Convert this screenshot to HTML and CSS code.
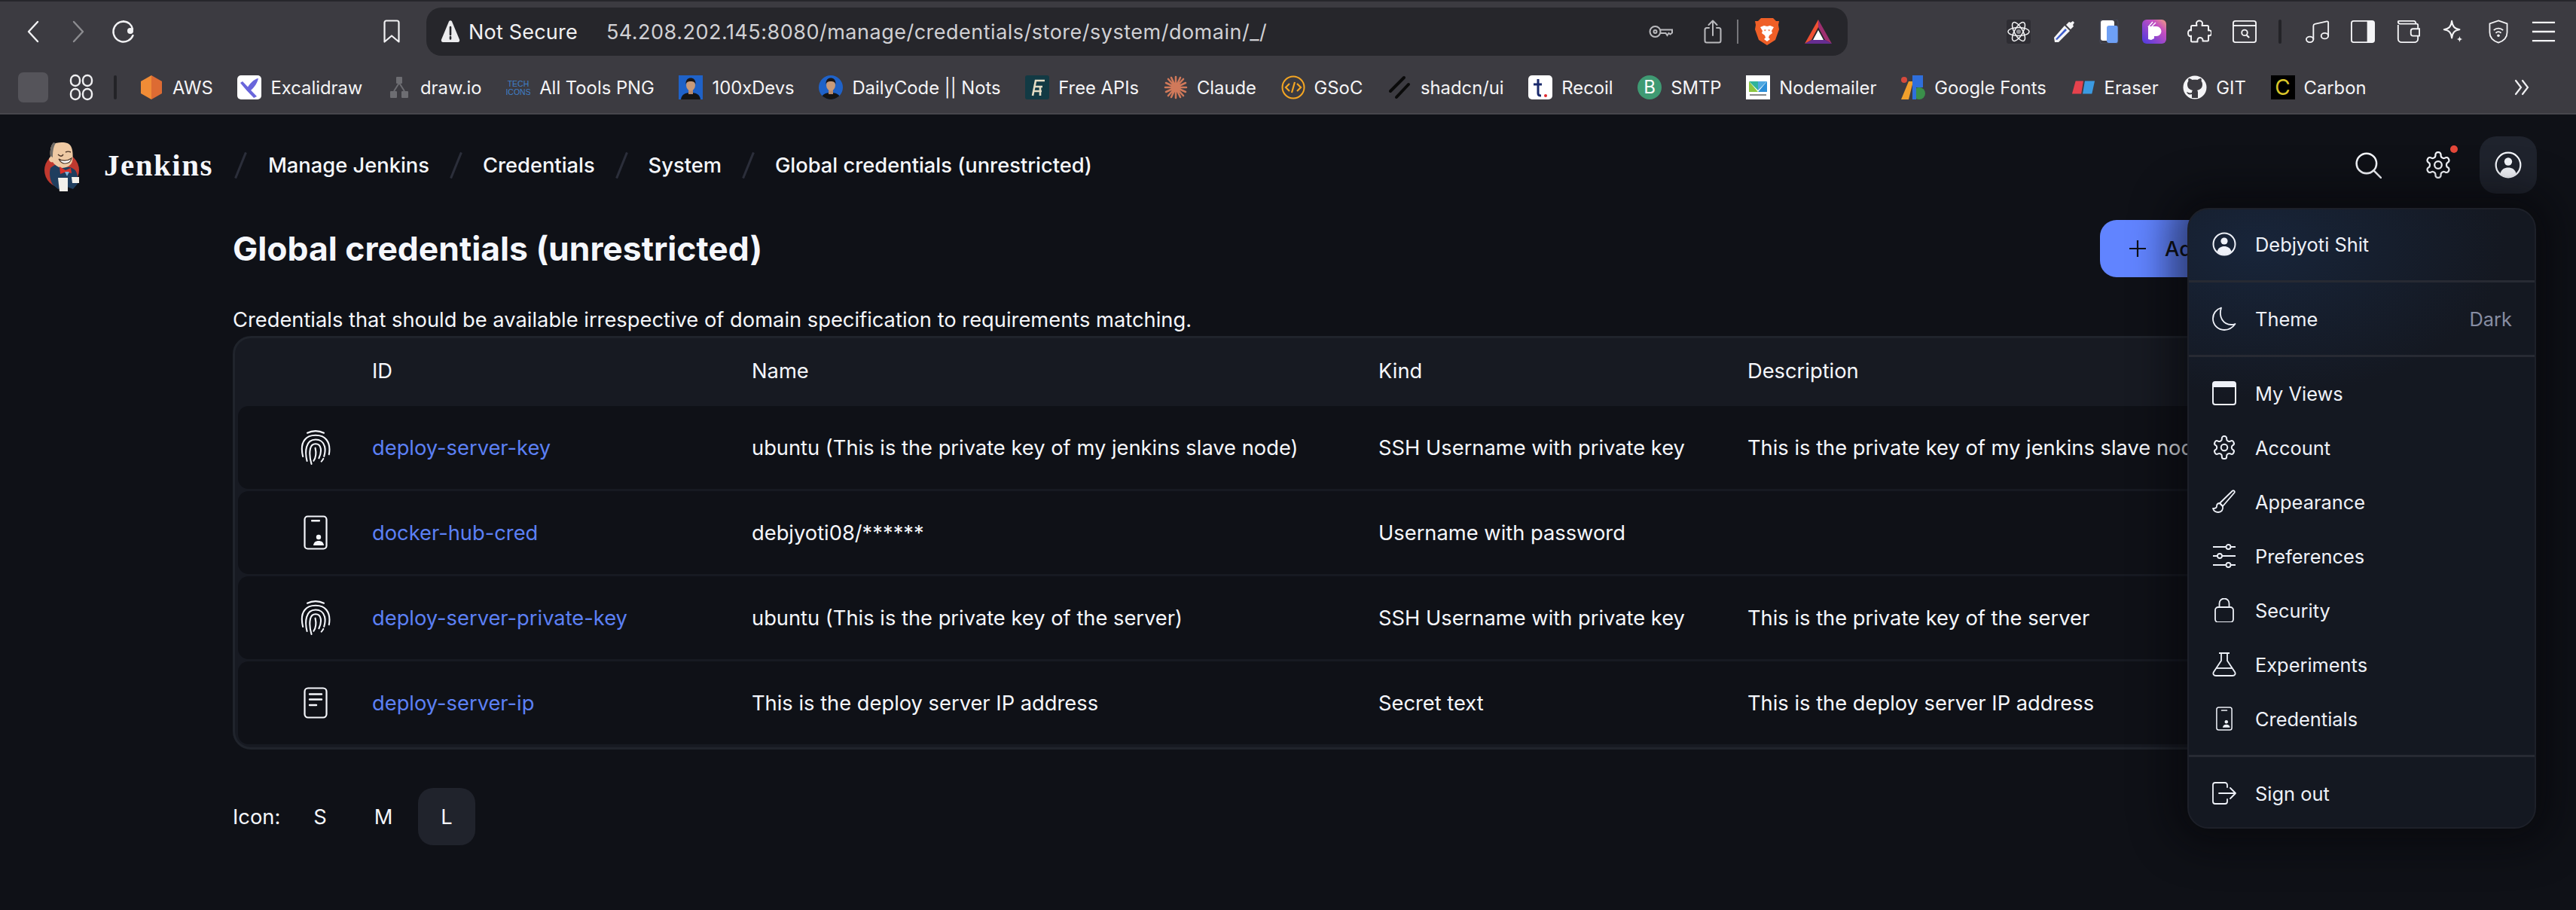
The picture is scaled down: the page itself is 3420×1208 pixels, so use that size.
FILE: index.html
```html
<!doctype html>
<html lang="en">
  <head>
    <meta charset="UTF-8" />
    <title>Global credentials (unrestricted)</title>
    <link rel="stylesheet" href="styles.css">
  </head>
  <body>
    <svg class="sprite" aria-hidden="true">
      <symbol id="i-user" viewBox="0 0 32 32">
        <circle cx="16" cy="16" r="14.5" fill="none" stroke="currentColor" stroke-width="2"/>
        <circle cx="16" cy="12" r="4.6" fill="currentColor"/>
        <path d="M6.5 26c1.5-5 5-7 9.5-7s8 2 9.5 7c-2.5 2.5-5.800 4-9.5 4s-7-1.5-9.5-4z" fill="currentColor"/>
      </symbol>
      <symbol id="i-gear" viewBox="1.500 .8 21 22.400">
        <path fill="none" stroke="currentColor" stroke-width="1.400" d="M12.220 1.500h-.44a2 2 0 0 0-2 2v.68a2 2 0 0 1-1 1.730l-.43.250a2 2 0 0 1-2 0l-.15-.08a2 2 0 0 0-2.730.730l-.22.380a2 2 0 0 0 .73 2.730l.15.100a2 2 0 0 1 1 1.720v.51a2 2 0 0 1-1 1.740l-.15.090a2 2 0 0 0-.73 2.730l.22.380a2 2 0 0 0 2.730.730l.15-.08a2 2 0 0 1 2 0l.43.250a2 2 0 0 1 1 1.730v.68a2 2 0 0 0 2 2h.44a2 2 0 0 0 2-2v-.68a2 2 0 0 1 1-1.730l.43-.25a2 2 0 0 1 2 0l.15.080a2 2 0 0 0 2.730-.73l.22-.39a2 2 0 0 0-.73-2.730l-.15-.08a2 2 0 0 1-1-1.740v-.5a2 2 0 0 1 1-1.740l.15-.09a2 2 0 0 0 .73-2.730l-.22-.38a2 2 0 0 0-2.730-.73l-.15.080a2 2 0 0 1-2 0l-.43-.25a2 2 0 0 1-1-1.730v-.68a2 2 0 0 0-2-2z"/>
        <circle cx="12" cy="12" r="3" fill="none" stroke="currentColor" stroke-width="1.400"/>
      </symbol>
      <symbol id="i-finger" viewBox="3 1.500 18 21">
        <g fill="none" stroke="currentColor" stroke-width=".95" stroke-linecap="round">
          <path d="M7 3.200c3-1.600 7-1.600 10 0"/>
          <path d="M4.300 17.500C3 12 4 9 5.500 7.200 7 5.300 9.500 4.600 12 4.600s5 .7 6.500 2.600c1.600 2 2.400 5 1.600 9"/>
          <path d="M6.800 20.200C6 17 6 13.500 6.600 11.500 7.400 8.600 9.500 7.200 12 7.200s4.800 1.400 5.500 4.200c.5 2 .2 4-.4 6"/>
          <path d="M9.500 22C8.600 19 8.300 15 8.800 12.700 9.200 10.800 10.500 9.800 12 9.800s2.800 1 3.100 2.900c.3 2-.2 4-1.100 5.800"/>
          <path d="M11.800 12.300c.7 3 .2 6-1 7.800"/>
          <path d="M15.500 20.500c.5-.5.900-1.100 1.200-1.700"/>
        </g>
      </symbol>
      <symbol id="i-phone" viewBox="0 0 32 46">
        <rect x="1.500" y="1.500" width="29" height="43" rx="4" fill="none" stroke="currentColor" stroke-width="2.200"/>
        <rect x="10" y="6" width="12" height="2.400" rx="1" fill="currentColor"/>
        <circle cx="20" cy="29" r="3.200" fill="currentColor"/>
        <path d="M13 40c.5-4 3-6 7-6s6.500 2 7 6z" fill="currentColor"/>
      </symbol>
      <symbol id="i-doc" viewBox="0 0 32 42">
        <rect x="1.500" y="1.500" width="29" height="39" rx="4.500" fill="none" stroke="currentColor" stroke-width="2.200"/>
        <path d="M8 9.500h16M8 16.500h16M8 24h9" fill="none" stroke="currentColor" stroke-width="2.400" stroke-linecap="round"/>
      </symbol>
      <symbol id="i-avatar" viewBox="0 0 32 32">
        <rect width="32" height="32" fill="#1f62c8"/>
        <path d="M3 32c1-7 6-9 13-9s12 2 13 9z" fill="#141414"/>
        <rect x="13" y="18" width="6" height="7" fill="#b98a6a"/>
        <ellipse cx="16" cy="13" rx="6" ry="7.500" fill="#c99a78"/>
        <path d="M9.500 12c-.5-6 3-8.500 6.500-8.500s7 2.500 6.500 8.500c-1-3-2.500-4-6.500-4s-5.500 1-6.500 4z" fill="#1c1512"/>
      </symbol>
    </svg>

    <header class="chrome">
      <div class="toolbar">
        <span class="nav-btn">
          <svg class="nav-ico" viewBox="0 0 16 30"><path d="M14 2 2 15l12 13" fill="none" stroke="#f2f2f4" stroke-width="2.400" stroke-linecap="round" stroke-linejoin="round"/></svg>
        </span>
        <span class="nav-btn">
          <svg class="nav-ico" viewBox="0 0 16 30"><path d="m2 2 12 13L2 28" fill="none" stroke="#8c8c90" stroke-width="2.400" stroke-linecap="round" stroke-linejoin="round"/></svg>
        </span>
        <span class="nav-btn">
          <svg class="reload-ico" viewBox="0 0 32 32"><path d="M16 2.500a13.500 13.500 0 1 0 12.500 18.500" fill="none" stroke="#f2f2f4" stroke-width="2.400" stroke-linecap="round"/><path d="M16 2.500c6 0 11 4.500 12 10" fill="none" stroke="#f2f2f4" stroke-width="2.400" stroke-linecap="round"/><circle cx="25" cy="15" r="4" fill="#f2f2f4"/></svg>
        </span>
        <svg class="bookmark-ico" viewBox="0 0 24 32"><path d="M2.500 29.500V4c0-1.400 1-2.500 2.500-2.500h14c1.500 0 2.500 1.100 2.500 2.500v25.500L12 21.500z" fill="none" stroke="#f2f2f4" stroke-width="2.200" stroke-linejoin="round"/></svg>

        <div class="omnibox">
          <svg class="warn-ico" viewBox="0 0 26 32"><path d="M11 2.500c.9-1.600 3.100-1.600 4 0l10 24c.7 1.700-.4 3.500-2.200 3.500H3.200C1.400 30 .3 28.200 1 26.500z" fill="#ececee"/><path d="M13 10v10M13 23v2.500" stroke="#26262b" stroke-width="2.600" stroke-linecap="round"/></svg>
          <span class="not-secure">Not Secure</span>
          <span class="url">54.208.202.145:8080/manage/credentials/store/system/domain/_/</span>
          <svg class="key-ico" viewBox="0 0 32 18"><g fill="none" stroke="#b9b9bd" stroke-width="2"><circle cx="8.500" cy="9" r="7"/><circle cx="8.500" cy="9" r="2"/><path d="M15.500 6.500H31v4l-2.500 2-2-1.500-2 3-2-3h-6.800"/></g></svg>
          <svg class="share-ico" viewBox="0 0 24 32"><g fill="none" stroke="#b9b9bd" stroke-width="2" stroke-linecap="round" stroke-linejoin="round"><path d="M7 11H4a2.500 2.500 0 0 0-2.500 2.500V28A2.500 2.500 0 0 0 4 30.500h16a2.500 2.500 0 0 0 2.500-2.500V13.500A2.500 2.500 0 0 0 20 11h-3"/><path d="M12 21V2M6.500 7 12 1.500 17.500 7"/></g></svg>
          <span class="omni-sep"></span>
          <svg class="brave-ico" viewBox="0 0 32 36"><path d="M8 0h16l4 4 4 0-1 5 1 6-5 14-11 7-11-7-5-14 1-6-1-5 4 0z" fill="#ef5f27"/><path d="M7 12l5-2 4 1 4-1 5 2-3 5 1 3-4 3-1 3 2 2-4 3-4-3 2-2-1-3-4-3 1-3z" fill="#fff"/><path d="M12 15.500h3l-2 2zM20 15.500h-3l2 2z" fill="#ef5f27"/></svg>
          <svg class="bat-ico" viewBox="0 0 36 32"><path d="M18 0 0 32l9-5L18 10z" fill="#ef5033"/><path d="M18 0v10l9 17 9 5z" fill="#9e2f70"/><path d="M0 32h36l-9-5H9z" fill="#662d91"/><path d="M18 14l7 13H11z" fill="#fff"/></svg>
        </div>

        <div class="exts">
          <span class="ext"><span class="react-box"><svg class="ext-ico" viewBox="0 0 32 32"><g fill="none" stroke="#f4f4f6" stroke-width="1.500"><ellipse cx="16" cy="16" rx="14" ry="5.500"/><ellipse cx="16" cy="16" rx="14" ry="5.500" transform="rotate(60 16 16)"/><ellipse cx="16" cy="16" rx="14" ry="5.500" transform="rotate(120 16 16)"/></g><circle cx="16" cy="16" r="3" fill="#8d8d92"/></svg></span></span>
          <span class="ext"><svg class="ext-ico" viewBox="0 0 32 32"><path d="M3 24 17 8l7 7-15 15H4z" fill="#f4f4f6"/><path d="M5 26 18 12l2 2L7 27z" fill="#3b5bcb"/><path d="m19 7 4-4 2 1 3-2 2 2-2 3 1 2-4 4z" fill="#f4f4f6"/></svg></span>
          <span class="ext"><svg class="ext-ico" viewBox="0 0 32 32"><rect x="5" y="1" width="18" height="27" rx="3" fill="#fff"/><rect x="13" y="8" width="15" height="23" rx="3" fill="#6ea0f5"/><rect x="4" y="0" width="24" height="32" rx="3" fill="none" stroke="#4a4f63" stroke-width=".8"/></svg></span>
          <span class="ext"><span class="pocket"><svg class="ext-ico" viewBox="0 0 32 32"><path d="M8 9h11a6 6 0 0 1 0 13h-3v3l-4 2-4-1z" fill="#fff"/><path d="M8 10 14 3M12 10l6-6" stroke="#fff" stroke-width="1.400"/></svg></span></span>
          <span class="ext"><svg class="ext-ico" viewBox="0 0 32 32"><path d="M12 5c0-2 2-3.500 4-3.500s4 1.500 4 3.500c0 1-.5 2-.5 3h7c1 0 1.500.5 1.500 1.500v5c1-.5 1.700-.5 2.500 0 2.200 1.500 2.200 5 0 6.500-.8.500-1.500.5-2.500 0v6c0 1-.5 1.500-1.500 1.500h-6c.5-3-1.500-4.500-3.500-4.500S13 25 13.500 29.500h-7c-1 0-1.500-.5-1.500-1.500v-6.500C3.500 23 1 21.500 1 18s2.500-5 4-3.500V9.500C5 8.500 5.500 8 6.500 8h6c0-1-.5-2-.5-3z" fill="none" stroke="#f4f4f6" stroke-width="2" stroke-linejoin="round"/></svg></span>
          <span class="ext"><svg class="ext-ico" viewBox="0 0 34 32"><g fill="none" stroke="#f4f4f6" stroke-width="2"><rect x="1" y="1" width="32" height="30" rx="3"/><path d="M1 7.500h32"/><circle cx="17" cy="17.500" r="4"/><path d="m20 21 3.500 3.500" stroke-width="2.400"/></g></svg></span>
          <span class="ext-sep"></span>
          <span class="ext"><svg class="ext-ico" viewBox="0 0 34 34"><g fill="none" stroke="#f4f4f6" stroke-width="2"><ellipse cx="6" cy="28" rx="5" ry="4"/><ellipse cx="27" cy="23" rx="5" ry="4"/><path d="M11 28V9c0-1.500.8-2.500 2-2.800L30 2.500c1.200-.2 2 .5 2 1.700V23"/></g></svg></span>
          <span class="ext"><svg class="ext-ico" viewBox="0 0 34 32"><rect x="1" y="1" width="32" height="30" rx="3" fill="none" stroke="#f4f4f6" stroke-width="2"/><path d="M23 1h7a3 3 0 0 1 3 3v24a3 3 0 0 1-3 3h-7z" fill="#f4f4f6"/></svg></span>
          <span class="ext"><svg class="ext-ico" viewBox="0 0 34 32"><g fill="none" stroke="#f4f4f6" stroke-width="2"><path d="M3 6.500V26a5 5 0 0 0 5 5h18a5 5 0 0 0 5-5V7a2 2 0 0 0-2-2H6a3 3 0 0 1-3-3 1 1 0 0 1 1-1h21c2 0 3 1 3 4"/><path d="M33 12h-9a3 3 0 0 0-3 3v4a3 3 0 0 0 3 3h9z" fill="#3c3b41"/></g></svg></span>
          <span class="ext"><svg class="ext-ico" viewBox="0 0 32 34"><g fill="none" stroke="#f4f4f6" stroke-width="2.200" stroke-linejoin="round"><path d="M14 2c1 8 4 11 11 12-7 1-10 4-11 12-1-8-4-11-11-12 7-1 10-4 11-12z"/></g><path d="M25 23c.4 3 1.300 4 4 4.500-2.700.5-3.600 1.500-4 4.500-.4-3-1.300-4-4-4.500 2.700-.5 3.600-1.500 4-4.500z" fill="#f4f4f6"/></svg></span>
          <span class="ext"><svg class="ext-ico" viewBox="0 0 30 36"><path d="M15 1.500 28 6v13c0 8-6 13-13 15.500C8 32 2 27 2 19V6z" fill="none" stroke="#f4f4f6" stroke-width="2"/><g fill="none" stroke="#f4f4f6" stroke-width="2"><path d="M8 16c4-4 10-4 14 0M11 20c2.500-2.500 5.500-2.500 8 0"/></g><circle cx="15" cy="24" r="2" fill="#f4f4f6"/></svg></span>
          <span class="ext"><svg class="ext-ico" viewBox="0 0 34 32"><path d="M1 3h32M1 16h32M1 29h32" stroke="#f4f4f6" stroke-width="2.400"/></svg></span>
        </div>
      </div>

      <div class="bookmarks">
        <span class="bm-blank"></span>
        <svg class="bm-grid" viewBox="0 0 32 36"><g fill="none" stroke="#f0f0f2" stroke-width="2.400"><rect x="2" y="2" width="12" height="14" rx="6"/><rect x="18" y="2" width="12" height="14" rx="6"/><rect x="2" y="20" width="12" height="14" rx="6"/><rect x="18" y="20" width="12" height="14" rx="6"/></g></svg>
        <span class="bm-sep"></span>
        <span class="bm"><svg class="bm-ico" viewBox="0 0 32 32"><path d="M16 0 30 8v16l-14 8z" fill="#dd6b33"/><path d="M16 0 2 8v16l14 8z" fill="#f08c36"/></svg>AWS</span>
        <span class="bm"><svg class="bm-ico" viewBox="0 0 32 32"><rect width="32" height="32" rx="5" fill="#fff"/><path d="M7 8c6 6 12 13 19 20l-4 2C15 23 9 16 4 10z" fill="#6965db"/><path d="M28 4c-6 1-12 7-16 15l3 3c6-4 11-10 13-18z" fill="#6965db"/></svg>Excalidraw</span>
        <span class="bm"><svg class="bm-ico" viewBox="0 0 32 32"><g fill="#6d6d72"><rect x="12" y="2" width="8" height="9" rx="1"/><rect x="4" y="21" width="9" height="9" rx="1"/><rect x="19" y="21" width="9" height="9" rx="1"/></g><path d="M16 10 9 21M16 10l7 11" stroke="#6d6d72" stroke-width="2"/></svg>draw.io</span>
        <span class="bm"><svg class="bm-ico" viewBox="0 0 32 32"><text class="tech-txt" x="16" y="15" text-anchor="middle">TECH</text><text class="tech-txt" x="16" y="26" text-anchor="middle">ICONS</text></svg>All Tools PNG</span>
        <span class="bm"><svg class="bm-ico"><use href="#i-avatar"/></svg>100xDevs</span>
        <span class="bm"><svg class="bm-ico round"><use href="#i-avatar"/></svg>DailyCode || Nots</span>
        <span class="bm"><svg class="bm-ico" viewBox="0 0 32 32"><rect width="32" height="32" rx="3" fill="#123a44"/><path d="M10 27 14 7h12M13 15h10M11 21h11M20 15v12" fill="none" stroke="#e4dcc4" stroke-width="2.600"/></svg>Free APIs</span>
        <span class="bm"><svg class="bm-ico" viewBox="0 0 32 32"><g stroke="#d0795a" stroke-width="2.600" stroke-linecap="round"><path d="M16 2v28M6 5l20 22M26 5 6 27M2 16h28M3 10l26 12M29 10 3 22M10 3l12 26M22 3 10 29"/></g></svg>Claude</span>
        <span class="bm"><svg class="bm-ico" viewBox="0 0 32 32"><circle cx="16" cy="16" r="14.500" fill="none" stroke="#f5a623" stroke-width="2"/><path d="m11 11-5 5 5 5M21 11l5 5-5 5M18 9l-4 14" fill="none" stroke="#f5a623" stroke-width="2.200"/></svg>GSoC</span>
        <span class="bm"><svg class="bm-ico" viewBox="0 0 32 32"><path d="M22 3 4 21M28 12 12 29" stroke="#0a0a0a" stroke-width="4" stroke-linecap="round"/></svg>shadcn/ui</span>
        <span class="bm"><svg class="bm-ico" viewBox="0 0 32 32"><rect width="32" height="32" rx="5" fill="#fff"/><path d="M13 5v19c0 2 1 3 4 3M7 12h11" fill="none" stroke="#1a2a6c" stroke-width="3"/><circle cx="23" cy="27" r="2" fill="#e0282e"/></svg>Recoil</span>
        <span class="bm"><span class="smtp-logo">B</span>SMTP</span>
        <span class="bm"><svg class="bm-ico" viewBox="0 0 32 32"><rect width="32" height="32" fill="#fff"/><path d="M4 8l12 12V8z" fill="#2fb39a"/><path d="M28 8 16 20V8z" fill="#4fa8e0"/><path d="M4 8v14h12z" fill="#8cc63f"/><path d="M28 8v14H16z" fill="#2c8fd8"/><path d="M5 26h22" stroke="#888" stroke-width="2"/></svg>Nodemailer</span>
        <span class="bm"><svg class="bm-ico" viewBox="0 0 32 32"><path d="M10 8 0 32h10l6-24z" fill="#f1a02c"/><circle cx="4" cy="6" r="4" fill="#d6493c"/><rect x="15" y="0" width="14" height="16" fill="#2f6fdc"/><circle cx="24" cy="24" r="8" fill="#3a8f4a"/><rect x="15" y="16" width="5" height="16" fill="#2f6fdc"/></svg>Google Fonts</span>
        <span class="bm"><svg class="bm-ico" viewBox="0 0 34 32"><path d="M6 7h11l-3 18H1z" fill="#e5424d"/><path d="M19 7h14l-4 18H16z" fill="#3b9ae1"/></svg>Eraser</span>
        <span class="bm"><svg class="bm-ico" viewBox="0 0 32 32"><circle cx="16" cy="16" r="15.500" fill="#f4f4f6"/><path d="M12 30v-5c-4 1-6 0-7-3 3 1 4 2 7 1 0-1 0-2 1-3-4-1-7-3-7-8 0-2 .6-3 1.500-4.500C7 6 7 5 8 4c2 0 3 1 4.500 2 2-.5 5-.5 7 0C21 5 22 4 24 4c1 1 1 2 .5 3.500C25.400 9 26 10 26 12c0 5-3 7-7 8 1 1 1 2 1 3v7z" fill="#3c3b41"/></svg>GIT</span>
        <span class="bm"><span class="carbon-logo">C</span>Carbon</span>
        <svg class="bm-more" viewBox="0 0 20 24"><path d="m2 3 7 9-7 9M11 3l7 9-7 9" fill="none" stroke="#f0f0f2" stroke-width="2.200" stroke-linecap="round"/></svg>
      </div>
    </header>

    <div class="page">
      <nav class="topbar">
        <svg class="jenkins-logo" viewBox="0 0 90 90">
          <circle cx="42" cy="52" r="23" fill="#c0392f"/>
          <path d="M27 49c4-4 10-6 12-3l8 2c4-1 9 0 13 4 3 4 4 12 3 18l-6 7-8-3-12 3-7-6c-4-6-5-16-3-22z" fill="#1f3e5e"/>
          <path d="M30 17c-3 3-4 11-3 17-1 1-3 3-1 6 1 1 3 2 4 1 2 3 6 7 12 8 7 0 13-4 14-9 1-4 1-13-1-18-2-6-7-7-13-7-5 0-9 1-12 2z" fill="#eec9a3"/>
          <path d="M31 15c-3 3-5 10-4 18l3 2c0-5 0-13 4-19z" fill="#6d6a66"/>
          <path d="M37 31c3 3 5 3 7 0M47 28c2-1 5-1 7 0" fill="none" stroke="#4a3326" stroke-width="1.400"/>
          <path d="M38 37c4 3 12 3 17-1-1 5-5 7-9 7-3 0-6-2-8-6z" fill="#fff" stroke="#4a3326" stroke-width="1.200"/>
          <path d="M39 47 47 52l7-3 1 7-7-2-8 3z" fill="#d8312a"/>
          <path d="M46 54l6 0-3 6z" fill="#7fb4d8"/>
          <path d="M37 62h13v18H39z" fill="#f2f0ea"/>
          <path d="M55 61h10v8H56z" fill="#f2f0ea"/>
        </svg>
        <span class="brand">Jenkins</span>
        <span class="crumb-sep"></span>
        <a class="crumb">Manage Jenkins</a>
        <span class="crumb-sep"></span>
        <a class="crumb">Credentials</a>
        <span class="crumb-sep"></span>
        <a class="crumb">System</a>
        <span class="crumb-sep"></span>
        <a class="crumb">Global credentials (unrestricted)</a>

        <div class="top-actions">
          <span class="top-btn"><svg class="top-ico" viewBox="0 0 34 34"><circle cx="15" cy="15" r="12.500" fill="none" stroke="currentColor" stroke-width="2.400"/><path d="m24 24 9 9" stroke="currentColor" stroke-width="2.400" stroke-linecap="round"/></svg></span>
          <span class="top-btn gear-btn"><svg class="top-ico"><use href="#i-gear"/></svg><span class="dot"></span></span>
          <span class="top-btn user-btn"><svg class="top-ico"><use href="#i-user"/></svg></span>
        </div>
      </nav>

      <main class="content">
        <div class="title-row">
          <h1>Global credentials (unrestricted)</h1>
          <button class="add-btn">
            <svg class="plus" viewBox="0 0 22 22"><path d="M11 0v22M0 11h22" stroke="#0f1117" stroke-width="2.200"/></svg>
            Add Credentials
          </button>
        </div>
        <p class="desc">Credentials that should be available irrespective of domain specification to requirements matching.</p>

        <div class="table">
          <div class="row head">
            <span></span><span>ID</span><span>Name</span><span>Kind</span><span>Description</span>
          </div>
          <div class="row">
            <svg class="cred-ico finger"><use href="#i-finger"/></svg>
            <a class="cred-id">deploy-server-key</a>
            <span>ubuntu (This is the private key of my jenkins slave node)</span>
            <span>SSH Username with private key</span>
            <span class="cell-desc">This is the private key of my jenkins slave node</span>
          </div>
          <div class="row">
            <svg class="cred-ico phone"><use href="#i-phone"/></svg>
            <a class="cred-id">docker-hub-cred</a>
            <span>debjyoti08/******</span>
            <span>Username with password</span>
            <span class="cell-desc"></span>
          </div>
          <div class="row">
            <svg class="cred-ico finger"><use href="#i-finger"/></svg>
            <a class="cred-id">deploy-server-private-key</a>
            <span>ubuntu (This is the private key of the server)</span>
            <span>SSH Username with private key</span>
            <span class="cell-desc">This is the private key of the server</span>
          </div>
          <div class="row">
            <svg class="cred-ico doc"><use href="#i-doc"/></svg>
            <a class="cred-id">deploy-server-ip</a>
            <span>This is the deploy server IP address</span>
            <span>Secret text</span>
            <span class="cell-desc">This is the deploy server IP address</span>
          </div>
        </div>

        <div class="icon-size">
          <span class="size-label">Icon:</span>
          <span class="size-opt">S</span>
          <span class="size-opt">M</span>
          <span class="size-opt active">L</span>
        </div>
      </main>

      <div class="menu">
        <div class="menu-group">
          <a class="menu-item"><svg class="menu-ico"><use href="#i-user"/></svg>Debjyoti Shit</a>
        </div>
        <div class="menu-group">
          <a class="menu-item">
            <svg class="menu-ico" viewBox="0 0 32 32"><path d="M12 1.500C5.500 3.500 1 9 1 16a15 15 0 0 0 15 15c6 0 11-3 14.500-8-1 .5-3 1-5 1C15 24 8 14 12 1.500z" fill="none" stroke="currentColor" stroke-width="1.800" stroke-linejoin="round"/></svg>
            Theme<span class="menu-value">Dark</span>
          </a>
        </div>
        <div class="menu-group">
          <a class="menu-item"><svg class="menu-ico" viewBox="0 0 32 32"><rect x="1" y="1" width="30" height="30" rx="3" fill="none" stroke="currentColor" stroke-width="2"/><path d="M1 8V4a3 3 0 0 1 3-3h24a3 3 0 0 1 3 3v4z" fill="currentColor"/></svg>My Views</a>
          <a class="menu-item"><svg class="menu-ico"><use href="#i-gear"/></svg>Account</a>
          <a class="menu-item"><svg class="menu-ico" viewBox="0 0 32 32"><g fill="none" stroke="currentColor" stroke-width="1.800" stroke-linejoin="round"><path d="M27 1.500c1.500-1 3.500.8 2.500 2.500L14 22l-4-4z"/><path d="M10 18c-3 0-4 2-4 4 0 2-2 3-5 3 1 3 4 5 7 5 4 0 7-3 6-8z"/></g></svg>Appearance</a>
          <a class="menu-item"><svg class="menu-ico" viewBox="0 0 32 32"><g fill="none" stroke="currentColor" stroke-width="1.800"><path d="M1 4h17M25 4h6M1 16h6M13 16h18M1 28h17M25 28h6"/><circle cx="21.500" cy="4" r="3"/><circle cx="10" cy="16" r="3"/><circle cx="21.500" cy="28" r="3"/></g></svg>Preferences</a>
          <a class="menu-item"><svg class="menu-ico" viewBox="0 0 32 32"><g fill="none" stroke="currentColor" stroke-width="1.800"><rect x="4" y="12" width="24" height="20" rx="4"/><path d="M9.500 12V7a6.500 6.500 0 0 1 13 0v5"/></g></svg>Security</a>
          <a class="menu-item"><svg class="menu-ico" viewBox="0 0 32 32"><g fill="none" stroke="currentColor" stroke-width="1.800" stroke-linejoin="round"><path d="M9 1h14M12 1v10L2 26c-1.500 2.500 0 5 3 5h22c3 0 4.500-2.500 3-5L20 11V1"/><path d="M6 21h20"/></g></svg>Experiments</a>
          <a class="menu-item"><svg class="menu-ico"><use href="#i-phone"/></svg>Credentials</a>
        </div>
        <div class="menu-group">
          <a class="menu-item"><svg class="menu-ico" viewBox="0 0 32 32"><g fill="none" stroke="currentColor" stroke-width="1.800" stroke-linecap="round" stroke-linejoin="round"><path d="M20 8V5a3 3 0 0 0-3-3H4a3 3 0 0 0-3 3v22a3 3 0 0 0 3 3h13a3 3 0 0 0 3-3v-3"/><path d="M9 16h22M24 9l7 7-7 7"/></g></svg>Sign out</a>
        </div>
      </div>
    </div>
  </body>
</html>
```

FILE: styles.css
```css
* {
  box-sizing: border-box;
}
html,
body {
  margin: 0;
  height: 1208px;
  overflow: hidden;
}
body {
  font-family: Inter, "Noto Sans", sans-serif;
  background: #0f1117;
  color: #f5f7fc;
}
.sprite {
  display: none;
}

/* browser chrome */
.chrome {
  height: 152px;
  background: #3c3b41;
  border-top: 2px solid #26262b;
  border-bottom: 2px solid #47464c;
}
.toolbar {
  height: 80px;
  display: flex;
  align-items: center;
  padding-left: 14px;
}
.nav-btn {
  width: 60px;
  display: flex;
  justify-content: center;
}
.nav-ico {
  width: 16px;
  height: 30px;
}
.reload-ico {
  width: 32px;
  height: 32px;
}
.bookmark-ico {
  width: 24px;
  height: 32px;
  margin-left: 314px;
}
.omnibox {
  width: 1887px;
  height: 64px;
  margin-left: 34px;
  background: #26262b;
  border-radius: 20px;
  display: flex;
  align-items: center;
  padding-left: 19px;
  color: #f0f0f2;
  font-size: 27px;
}
.warn-ico {
  width: 26px;
  height: 32px;
}
.not-secure {
  margin-left: 11px;
  letter-spacing: 0.2px;
}
.url {
  margin-left: 38px;
  color: #d0d0d4;
  letter-spacing: 0.5px;
}
.key-ico {
  width: 32px;
  height: 18px;
  margin-left: auto;
}
.share-ico {
  width: 24px;
  height: 32px;
  margin-left: 41px;
}
.omni-sep {
  width: 2px;
  height: 32px;
  background: #77777b;
  margin-left: 20px;
}
.brave-ico {
  width: 32px;
  height: 36px;
  margin-left: 22px;
}
.bat-ico {
  width: 36px;
  height: 32px;
  margin-left: 34px;
  margin-right: 21px;
}
.exts {
  display: flex;
  align-items: center;
  margin-left: 197px;
}
.ext {
  width: 60px;
  display: flex;
  justify-content: center;
}
.ext-ico {
  width: 32px;
  height: 32px;
  display: block;
}
.react-box {
  background: #2e2d33;
  border-radius: 3px;
}
.pocket {
  border-radius: 6px;
  background: linear-gradient(45deg, #4a3ae0, #c64fc0 70%, #f0a080);
}
.ext-sep {
  width: 4px;
  height: 32px;
  margin: 0 18px 0 15px;
  background: #232327;
  border-radius: 2px;
}

.bookmarks {
  height: 68px;
  display: flex;
  align-items: center;
  padding-left: 24px;
  font-size: 23.8px;
  color: #f4f4f6;
}
.bm-blank {
  width: 40px;
  height: 40px;
  background: #55545a;
  border-radius: 7px;
}
.bm-grid {
  width: 32px;
  height: 36px;
  margin-left: 28px;
}
.bm-sep {
  width: 4px;
  height: 32px;
  background: #232327;
  border-radius: 2px;
  margin: 0 30px 0 27px;
}
.bm {
  display: flex;
  align-items: center;
  gap: 12px;
  margin-right: 32.7px;
  white-space: nowrap;
}
.bm-ico {
  width: 32px;
  height: 32px;
  flex: none;
}
.bm-ico.round {
  border-radius: 50%;
}
.tech-txt {
  font-family: "Liberation Sans", sans-serif;
  font-size: 10.5px;
  fill: #3f7fc8;
}
.smtp-logo {
  width: 32px;
  height: 32px;
  border-radius: 50%;
  background: #3f9a73;
  color: #fff;
  font-size: 24px;
  text-align: center;
  line-height: 32px;
}
.carbon-logo {
  width: 32px;
  height: 32px;
  background: #000;
  color: #d9c52a;
  font-size: 28px;
  text-align: center;
  line-height: 32px;
}
.bm-more {
  width: 20px;
  height: 24px;
  margin-left: auto;
  margin-right: 62px;
}

/* jenkins page */
.page {
  position: relative;
  height: 1056px;
}
.topbar {
  height: 134px;
  display: flex;
  align-items: center;
  padding: 0 52px 0 40px;
  font-size: 27.3px;
  font-weight: 500;
}
.jenkins-logo {
  width: 90px;
  height: 90px;
  flex: none;
}
.brand {
  font-family: "Liberation Serif", serif;
  font-weight: 700;
  font-size: 41px;
  letter-spacing: 1.5px;
  margin-left: 8px;
}
.crumb-sep {
  width: 3px;
  height: 37px;
  margin: 0 34px;
  background: #2b2e3a;
  transform: rotate(22deg);
}
.brand + .crumb-sep {
  margin: 0 35px;
}
.top-actions {
  margin-left: auto;
  display: flex;
  align-items: center;
}
.top-btn {
  position: relative;
  width: 76px;
  height: 76px;
  margin-left: 17px;
  display: flex;
  align-items: center;
  justify-content: center;
  border-radius: 22px;
}
.top-ico {
  width: 36px;
  height: 36px;
}
.user-btn {
  background: #1f232d;
}
.dot {
  position: absolute;
  top: 12px;
  right: 12px;
  width: 10px;
  height: 10px;
  border-radius: 50%;
  background: #e5483a;
}

.content {
  padding: 0 309px;
}
.title-row {
  height: 84px;
  margin-top: 2px;
  display: flex;
  align-items: center;
  justify-content: space-between;
}
h1 {
  margin: 0;
  font-size: 44.4px;
  font-weight: 700;
}
.add-btn {
  width: 323px;
  height: 76px;
  padding-left: 39px;
  display: flex;
  align-items: center;
  gap: 25px;
  background: #6184ff;
  color: #0f1117;
  border: none;
  border-radius: 22px;
  font: 500 27.3px Inter, sans-serif;
  white-space: nowrap;
}
.plus {
  width: 22px;
  height: 22px;
}
.desc {
  margin: 36px 0 0;
  font-size: 27.3px;
  line-height: 34px;
}

.table {
  margin-top: 4px;
  padding: 0 4px 4px;
  background: #171a22;
  border: 3px solid #20242c;
  border-radius: 24px;
  font-size: 27.3px;
  display: flex;
  flex-direction: column;
  gap: 3px;
}
.row {
  display: grid;
  grid-template-columns: 178px 504px 832px 490px 1fr;
  align-items: center;
  height: 110px;
  background: #0f1117;
  border-radius: 14px;
  white-space: nowrap;
}
.row.head {
  height: 87px;
  background: transparent;
}
.cred-id {
  color: #5c80f5;
}
.cred-ico {
  justify-self: start;
}
.cred-ico.finger {
  width: 40px;
  height: 46px;
  margin-left: 83px;
}
.cred-ico.phone {
  width: 32px;
  height: 46px;
  margin-left: 87px;
}
.cred-ico.doc {
  width: 32px;
  height: 42px;
  margin-left: 87px;
}

.icon-size {
  margin-top: 51px;
  display: flex;
  align-items: center;
  font-size: 27.3px;
}
.size-label {
  width: 74px;
}
.size-opt {
  width: 84px;
  height: 76px;
  display: flex;
  align-items: center;
  justify-content: center;
  border-radius: 20px;
}
.size-opt.active {
  width: 76px;
  margin-left: 4px;
  background: #20232c;
}

/* user dropdown, lies over the page */
.menu {
  position: absolute;
  top: 124px;
  left: 2904px;
  width: 463px;
  height: 824px;
  background: radial-gradient(ellipse 330px 200px at 90px 50px, #18253a, transparent), #141821;
  border: 2px solid #1d2029;
  border-radius: 28px;
  box-shadow: 0 0 50px 24px rgba(5, 6, 9, 0.55);
  font-size: 25.4px;
  color: #eef1f8;
}
.menu-group {
  padding: 12px 0;
  border-bottom: 3px solid #272a33;
}
.menu-group:first-child {
  padding-top: 10px;
}
.menu-group:last-child {
  border-bottom: none;
}
.menu-item {
  height: 72px;
  display: flex;
  align-items: center;
  padding: 0 30px 0 31px;
  gap: 25px;
}
.menu-ico {
  width: 32px;
  height: 32px;
  flex: none;
}
.menu-value {
  margin-left: auto;
  color: #878da3;
}
```
